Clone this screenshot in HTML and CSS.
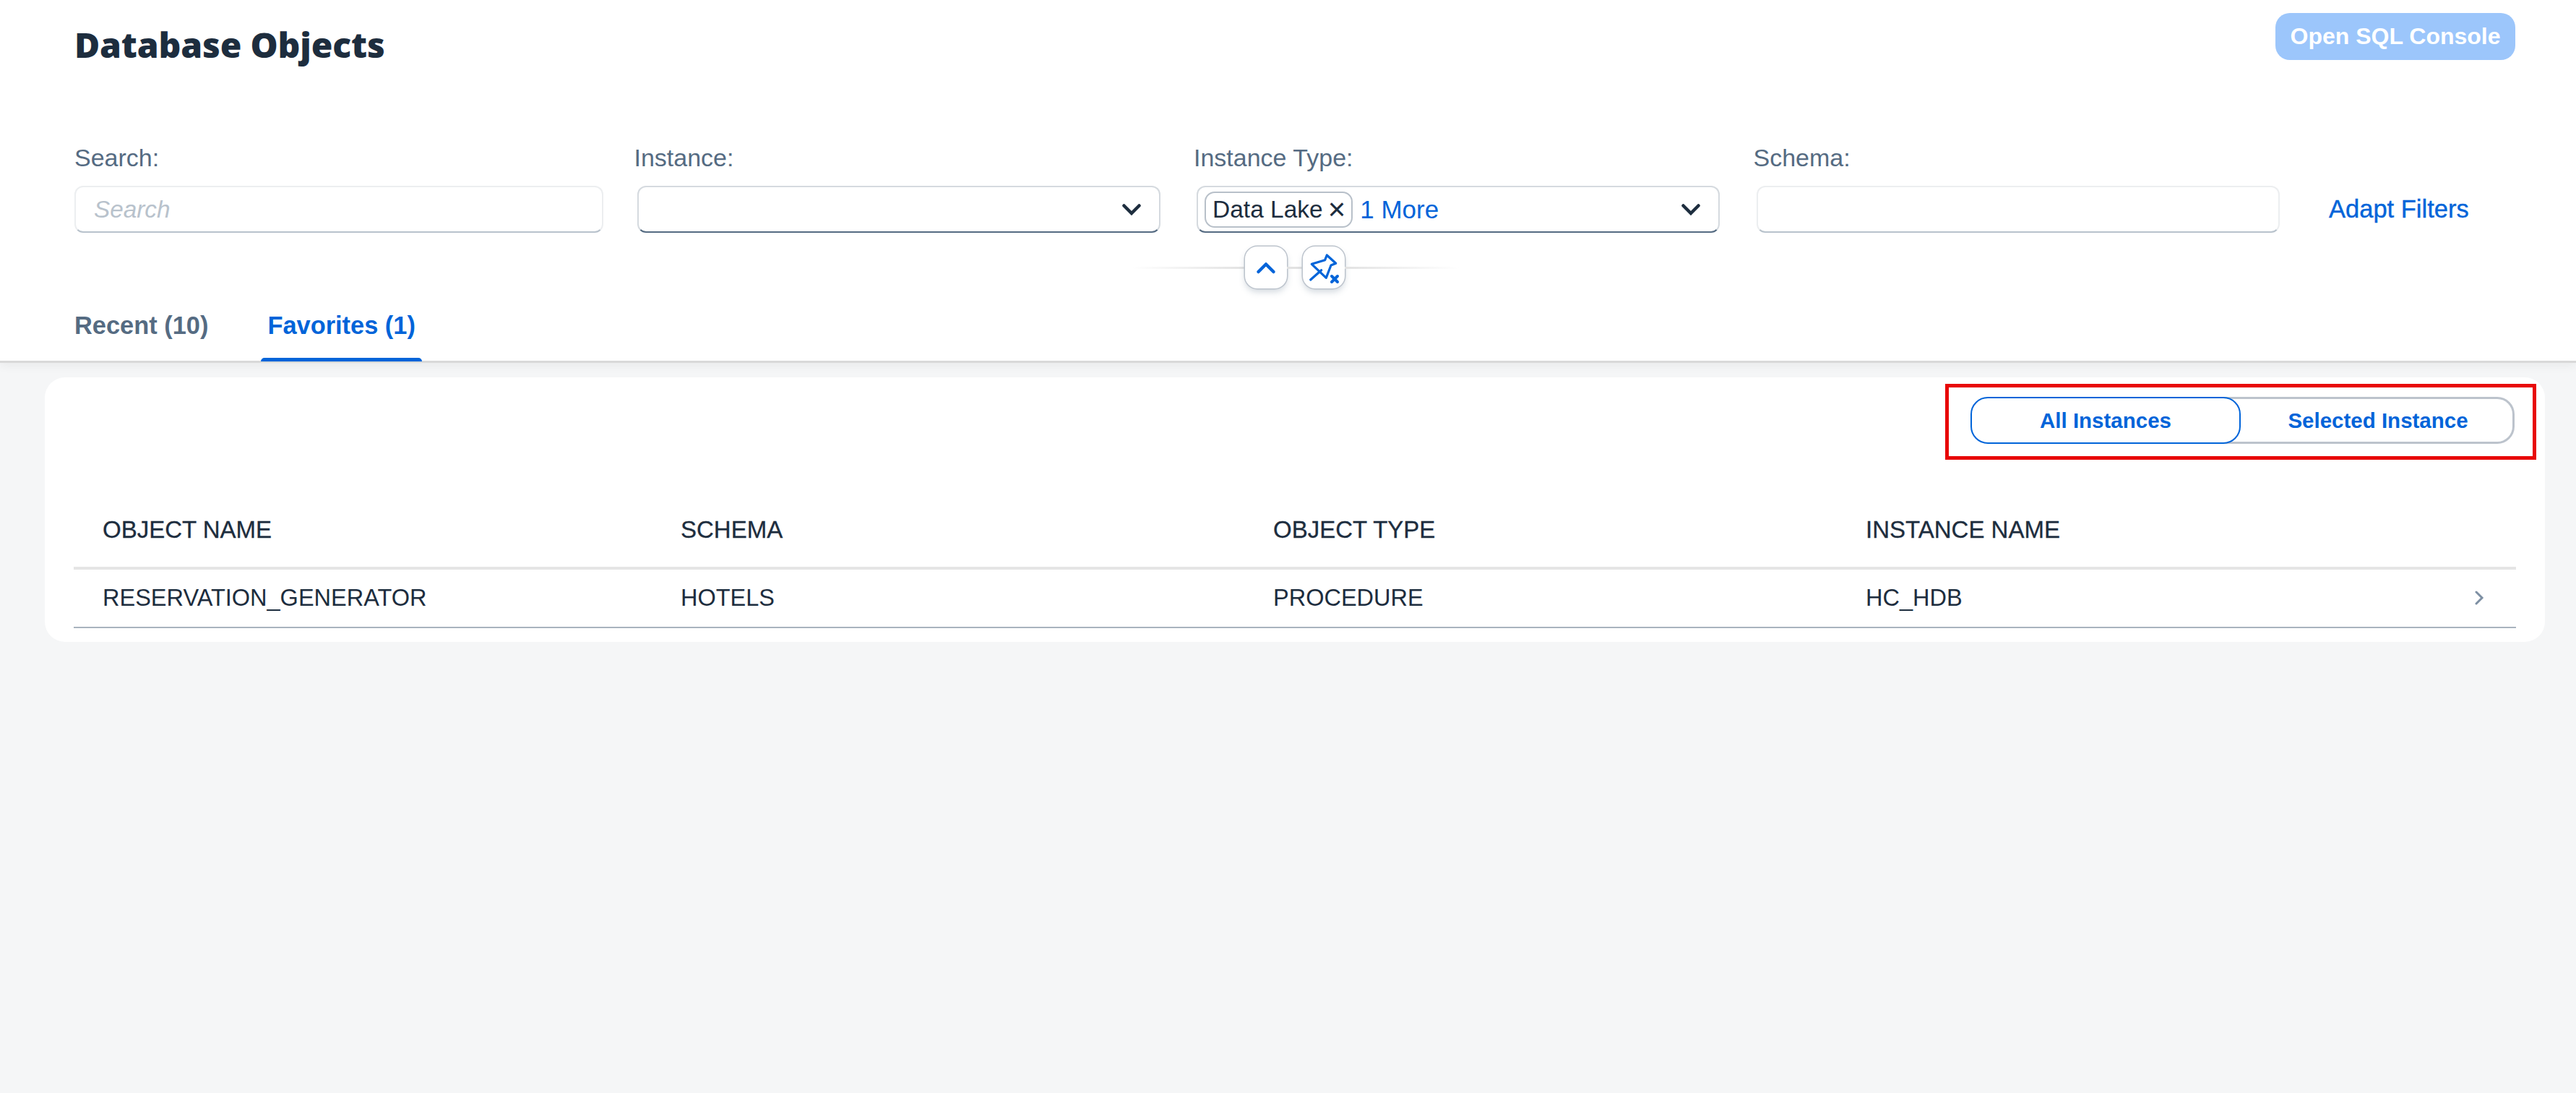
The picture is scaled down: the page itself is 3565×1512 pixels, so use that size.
FILE: index.html
```html
<!DOCTYPE html>
<html lang="en">
<head>
  <meta charset="UTF-8">
  <title>Database Objects</title>
  <link rel="stylesheet" href="styles.css">
</head>
<body>
  <header class="page-header">
    <div class="title-row">
      <h1>Database Objects</h1>
      <button class="console-btn">Open SQL Console</button>
    </div>

    <div class="filter-bar">
      <div class="filter">
        <label>Search:</label>
        <div class="field field-search"><span class="placeholder">Search</span></div>
      </div>
      <div class="filter">
        <label>Instance:</label>
        <div class="field field-select">
          <svg class="arrow" width="26" height="16" viewBox="0 0 26 16"><path d="M2.5 2.5 13 13 23.5 2.5" /></svg>
        </div>
      </div>
      <div class="filter">
        <label>Instance Type:</label>
        <div class="field field-select">
          <span class="token">Data Lake<span class="token-x">×</span></span>
          <span class="more">1 More</span>
          <svg class="arrow" width="26" height="16" viewBox="0 0 26 16"><path d="M2.5 2.5 13 13 23.5 2.5" /></svg>
        </div>
      </div>
      <div class="filter">
        <label>Schema:</label>
        <div class="field field-plain"></div>
      </div>
      <a class="adapt-link">Adapt Filters</a>
    </div>

    <div class="collapse-row">
      <span class="line line-left"></span>
      <button class="round-btn">
        <svg width="58" height="58" viewBox="0 0 58 58"><path class="blue-stroke" d="M18.5 35 29 24.5 39.500 35" /></svg>
      </button>
      <span class="line line-mid"></span>
      <button class="round-btn">
        <svg width="58" height="58" viewBox="0 0 58 58">
          <path class="blue-thin" d="M10.700 46 25.700 32.700M12.300 24.300 30.700 18.700 33.300 12 45.700 23.300 39 26 32.300 43.300Z" />
          <path class="blue-thick" d="M40 41 48 49M48 41 40 49" />
        </svg>
      </button>
      <span class="line line-right"></span>
    </div>

    <nav class="tabs">
      <a class="tab">Recent (10)</a>
      <a class="tab tab-active">Favorites (1)</a>
    </nav>
  </header>

  <main class="card">
    <div class="toolbar">
      <div class="red-box">
        <div class="segmented">
          <button class="seg seg-on">All Instances</button>
          <button class="seg seg-off">Selected Instance</button>
        </div>
      </div>
    </div>

    <table class="objects">
      <colgroup>
        <col class="col-name">
        <col class="col-other">
        <col class="col-other">
        <col class="col-other">
        <col>
      </colgroup>
      <thead>
        <tr>
          <th>OBJECT NAME</th>
          <th>SCHEMA</th>
          <th>OBJECT TYPE</th>
          <th>INSTANCE NAME</th>
          <th></th>
        </tr>
      </thead>
      <tbody>
        <tr>
          <td>RESERVATION_GENERATOR</td>
          <td>HOTELS</td>
          <td>PROCEDURE</td>
          <td>HC_HDB</td>
          <td class="nav-cell">
            <svg width="14" height="20" viewBox="0 0 14 20"><path d="M3 2 11 10 3 18" /></svg>
          </td>
        </tr>
      </tbody>
    </table>
  </main>
</body>
</html>
```

FILE: styles.css
```css
* {
  box-sizing: border-box;
}
body {
  margin: 0;
  min-height: 1512px;
  background-color: #f5f6f7;
  color: #1d2d3e;
  font-family: "Liberation Sans", Arial, sans-serif;
  font-size: 32px;
}
button {
  font-family: inherit;
  padding: 0;
}

.page-header {
  position: relative;
  height: 502px;
  background-color: #fff;
  border-bottom: 3px solid #d9d9d9;
  box-shadow: 0 3px 14px rgba(0, 0, 0, 0.06);
}
.title-row {
  display: flex;
  justify-content: space-between;
  align-items: flex-start;
  height: 200px;
  padding: 18px 84px 0 103px;
}
h1 {
  margin: 0;
  padding-top: 11px;
  font-family: "Open Sans", sans-serif;
  font-size: 48px;
  font-weight: 800;
  letter-spacing: -0.15px;
  line-height: 65px;
}
.console-btn {
  width: 332px;
  height: 65px;
  border: none;
  border-radius: 20px;
  background-color: #9cc6fb;
  color: #fff;
  font-size: 32px;
  font-weight: bold;
}

.filter-bar {
  display: grid;
  grid-template-columns: repeat(4, 774.5px) auto;
  padding-left: 103px;
}
.filter label {
  display: block;
  height: 57px;
  color: #556b82;
  font-size: 34px;
  line-height: 36px;
}
.field {
  display: flex;
  align-items: center;
  width: 724px;
  height: 65px;
  margin-left: 4px;
  background-color: #fff;
  border: 2px solid #eceef0;
  border-bottom-color: #556b82;
  border-radius: 12px;
}
.field-select {
  border-color: #d5dadf;
  border-bottom-color: #556b82;
}
.field-search {
  width: 732px;
  margin-left: 0;
  border-bottom-color: #b8c2cc;
}
.field-plain {
  border-bottom-color: #b8c2cc;
}
.placeholder {
  padding-left: 25px;
  color: #b8c2cc;
  font-size: 33.3px;
  font-style: italic;
}
.token {
  display: flex;
  align-items: center;
  height: 50px;
  margin-left: 9px;
  padding: 0 8px 0 9px;
  border: 2px solid #b8c0c9;
  border-radius: 14px;
  font-size: 33.5px;
  white-space: nowrap;
}
.token-x {
  margin-left: 7px;
  font-size: 42px;
  line-height: 42px;
}
.more {
  margin-left: 10px;
  color: #0064d9;
  font-size: 35px;
}
.arrow {
  margin-left: auto;
  margin-right: 25px;
  fill: none;
  stroke: #1d2d3e;
  stroke-width: 4.5;
  stroke-linecap: round;
}
.adapt-link {
  align-self: end;
  margin-left: 22px;
  padding-bottom: 13px;
  color: #0064d9;
  font-size: 34.5px;
  white-space: nowrap;
  -webkit-text-stroke: 0.4px #0064d9;
}

.collapse-row {
  display: flex;
  align-items: center;
  height: 58px;
  margin-top: 19px;
  padding-left: 1566px;
}
.line {
  height: 3px;
  background-color: #e2e2e2;
}
.line-left {
  width: 157px;
  background: linear-gradient(to right, #fff, #e2e2e2);
}
.line-mid {
  width: 22px;
}
.line-right {
  width: 158px;
  background: linear-gradient(to right, #e2e2e2, #fff);
}
.round-btn {
  display: flex;
  width: 58px;
  height: 58px;
  background-color: #fff;
  border: none;
  border-radius: 17px;
  box-shadow: 0 0 0 1.500px #bcc3cc, 0 5px 8px rgba(85, 107, 130, 0.25);
}
.round-btn svg {
  flex: none;
  fill: none;
  stroke-linecap: round;
  stroke-linejoin: round;
}
.blue-stroke {
  stroke: #0064d9;
  stroke-width: 4.5;
}
.blue-thin {
  stroke: #0064d9;
  stroke-width: 3.2;
}
.blue-thick {
  stroke: #0064d9;
  stroke-width: 4;
}

.tabs {
  display: flex;
  gap: 82px;
  padding-left: 103px;
  margin-top: 23px;
  color: #556b82;
  font-size: 34.4px;
  font-weight: bold;
}
.tab {
  position: relative;
  height: 78px;
  line-height: 56px;
  white-space: nowrap;
}
.tab-active {
  color: #0064d9;
  padding: 0 9px;
  margin-left: -9px;
}
.tab-active::after {
  content: "";
  position: absolute;
  left: 0;
  right: 0;
  bottom: 0;
  height: 5px;
  background-color: #0064d9;
  border-radius: 5px 5px 0 0;
}

.card {
  margin: 20px 43px 0 62px;
  padding: 9px 40px 20px;
  height: 366px;
  background-color: #fff;
  border-radius: 28px;
}
.toolbar {
  display: flex;
  justify-content: flex-end;
  margin-right: -28px;
  margin-bottom: 44px;
}
.red-box {
  padding: 13px 25px 17px 30px;
  border: 5px solid #e80808;
}
.segmented {
  display: flex;
  width: 753px;
  height: 65px;
}
.seg {
  height: 65px;
  background-color: #fff;
  color: #0064d9;
  font-size: 29.5px;
  font-weight: bold;
}
.seg-on {
  position: relative;
  width: 374px;
  border: 2px solid #0064d9;
  border-radius: 24px;
}
.seg-off {
  flex: 1;
  margin-left: -24px;
  padding-left: 28px;
  border: 3px solid #bcc3cc;
  border-left: none;
  border-radius: 0 24px 24px 0;
}

.objects {
  width: 3380px;
  border-collapse: collapse;
  table-layout: fixed;
}
.col-name {
  width: 800px;
}
.col-other {
  width: 820px;
}
.objects th {
  height: 106px;
  padding: 2px 0 0 40px;
  border-bottom: 4px solid #e5e5e5;
  font-size: 33px;
  font-weight: 500;
  text-align: left;
  white-space: nowrap;
  -webkit-text-stroke: 0.3px #1d2d3e;
}
.objects td {
  height: 82px;
  padding: 0 0 0 40px;
  border-bottom: 2px solid #a9b4be;
  font-size: 32.5px;
  white-space: nowrap;
}
.objects .nav-cell {
  padding: 0 44px 4px 0;
  text-align: right;
}
.nav-cell svg {
  display: inline-block;
  vertical-align: middle;
  fill: none;
  stroke: #7d8fa3;
  stroke-width: 3;
  stroke-linecap: round;
}
```
